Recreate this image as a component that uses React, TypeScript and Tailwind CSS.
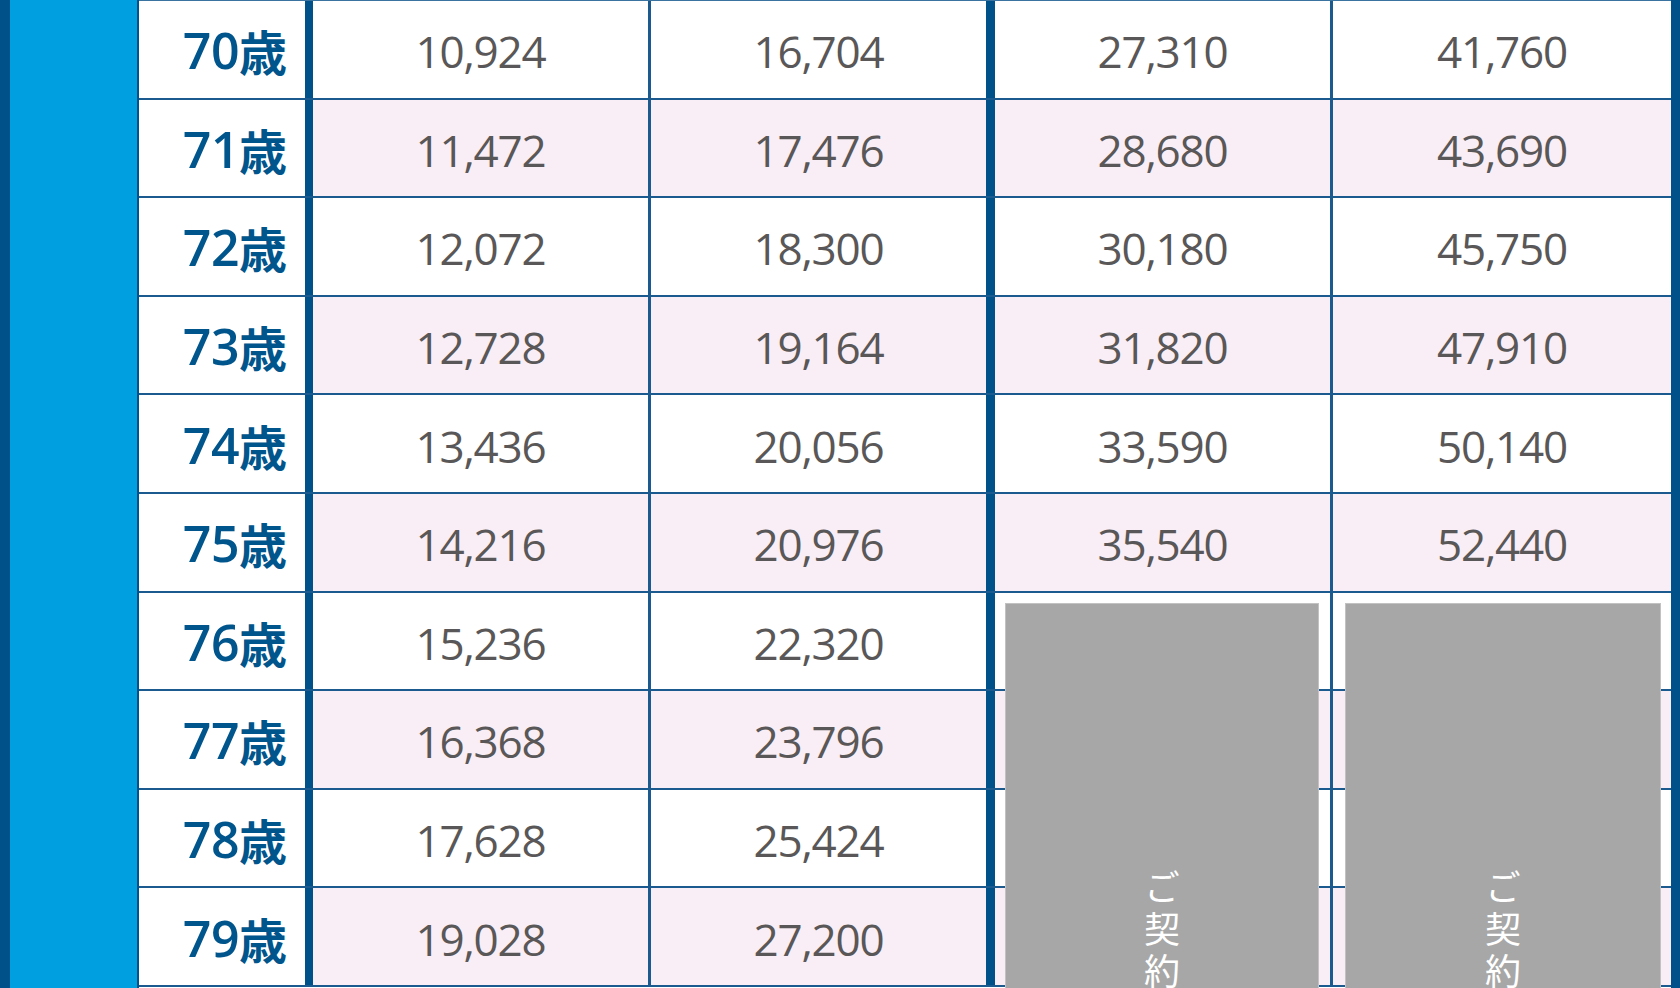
import React from "react";

const rows: { age: string; v: string[] }[] = [
  { age: "70", v: ["10,924", "16,704", "27,310", "41,760"] },
  { age: "71", v: ["11,472", "17,476", "28,680", "43,690"] },
  { age: "72", v: ["12,072", "18,300", "30,180", "45,750"] },
  { age: "73", v: ["12,728", "19,164", "31,820", "47,910"] },
  { age: "74", v: ["13,436", "20,056", "33,590", "50,140"] },
  { age: "75", v: ["14,216", "20,976", "35,540", "52,440"] },
  { age: "76", v: ["15,236", "22,320", "", ""] },
  { age: "77", v: ["16,368", "23,796", "", ""] },
  { age: "78", v: ["17,628", "25,424", "", ""] },
  { age: "79", v: ["19,028", "27,200", "", ""] },
];

const numFont = { fontFamily: '"Open Sans", "Noto Sans CJK JP", sans-serif' };
const ageFont = { fontFamily: '"Open Sans", "Noto Sans CJK JP", sans-serif' };
const jpFont = { fontFamily: '"Noto Sans CJK JP", sans-serif' };

function Cell({ text, pink, w }: { text: string; pink: boolean; w: string }) {
  return (
    <div
      className={`${w} h-full flex items-center justify-center pt-[4px] text-[44px] leading-none tracking-[-1.2px] text-[#595757] ${
        pink ? "bg-[#f9eef5]" : "bg-white"
      }`}
      style={numFont}
    >
      {text}
    </div>
  );
}

function Row({ age, v, pink }: { age: string; v: string[]; pink: boolean }) {
  return (
    <div className="flex flex-col">
      <div className="flex h-[96.6px]">
        <div className="w-[166px] h-full bg-white flex items-center justify-end pr-[18px] pt-[2px] leading-none text-[#00558c]">
          <span className="text-[50px] font-semibold tracking-[-0.5px]" style={ageFont}>
            {age}
          </span>
          <span className="text-[48px] font-bold" style={jpFont}>
            歳
          </span>
        </div>
        <div className="w-[8px] h-full bg-[#00508a]" />
        <Cell text={v[0]} pink={pink} w="w-[335px]" />
        <div className="w-[3px] h-full bg-[#1a5a8e]" />
        <Cell text={v[1]} pink={pink} w="w-[335px]" />
        <div className="w-[9px] h-full bg-[#00508a]" />
        <Cell text={v[2]} pink={pink} w="w-[335px]" />
        <div className="w-[3px] h-full bg-[#1a5a8e]" />
        <Cell text={v[3]} pink={pink} w="w-[338px]" />
      </div>
      <div className="h-[2px] bg-[#1a5a8e]" />
    </div>
  );
}

function GrayBox({ left, width }: { left: string; width: string }) {
  return (
    <div
      className={`absolute top-[603px] ${left} ${width} h-[420px] bg-[#a8a7a7] border border-[#c2c2c2] flex justify-center`}
    >
      <div
        className="mt-[265px] text-white text-[36px] leading-none tracking-[6px]"
        style={{
          ...jpFont,
          writingMode: "vertical-rl",
        }}
      >
        ご契約
      </div>
    </div>
  );
}

export default function App() {
  return (
    <div className="relative w-[1680px] h-[988px] overflow-hidden bg-white flex">
      <div className="w-[10px] h-full bg-[#00508a]" />
      <div className="w-[127px] h-full bg-[#009fdf]" />
      <div className="w-[2px] h-full bg-[#00508a]" />
      <div className="w-[1532px] h-full flex flex-col">
        <div className="h-[1px] bg-[#3a73a0]" />
        {rows.map((r, i) => (
          <Row key={r.age} age={r.age} v={r.v} pink={i % 2 === 1} />
        ))}
      </div>
      <div className="w-[9px] h-full bg-[#00508a]" />
      <GrayBox left="left-[1005px]" width="w-[314px]" />
      <GrayBox left="left-[1345px]" width="w-[316px]" />
    </div>
  );
}
